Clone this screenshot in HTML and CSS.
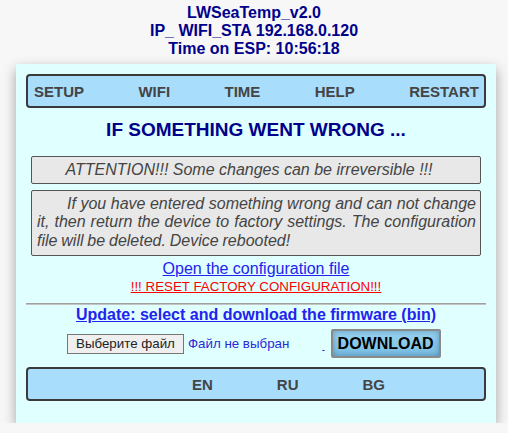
FILE: index.html
```html
<!DOCTYPE html>
<html>
<head>
<meta charset="utf-8">
<link rel="stylesheet" href="styles.css">
</head>
<body>
<header class="top">
  <div>LWSeaTemp_v2.0</div>
  <div>IP_ WIFI_STA 192.168.0.120</div>
  <div>Time on ESP: 10:56:18</div>
</header>
<main class="card">
  <nav class="bar menu">
    <a>SETUP</a><a>WIFI</a><a>TIME</a><a>HELP</a><a>RESTART</a>
  </nav>
  <h3 class="title">IF SOMETHING WENT WRONG ...</h3>
  <div class="note center">ATTENTION!!! Some changes can be irreversible !!!</div>
  <div class="note text">If you have entered something wrong and can not change it, then return the device to factory settings. The configuration file will be deleted. Device rebooted!</div>
  <div class="links">
    <a class="link" href="#">Open the configuration file</a>
    <a class="reset" href="#">!!! RESET FACTORY CONFIGURATION!!!</a>
  </div>
  <hr class="sep">
  <a class="update" href="#">Update: select and download the firmware (bin)</a>
  <form class="upload">
    <span class="file"><span class="filebtn">Выберите файл</span><span class="filename">Файл не выбран</span></span>
    <a class="blank" href="#">&nbsp;</a>
    <span class="dl">DOWNLOAD</span>
  </form>
  <nav class="bar langs">
    <a>EN</a><a>RU</a><a>BG</a>
  </nav>
</main>
</body>
</html>
```
FILE: styles.css
```css
html, body {
  margin: 0;
  padding: 0;
  background: #f7f7f7;
  font-family: "Liberation Sans", Arial, sans-serif;
}
.top {
  padding-top: 4px;
  text-align: center;
  color: #00008b;
  font-weight: bold;
  font-size: 16px;
  line-height: 18px;
}
.card {
  width: 480px;
  margin: 6px 0 0 16px;
  background: #e0ffff;
  box-shadow: 0 5px 12px rgba(0, 0, 0, 0.35);
  padding: 10px 10px 22px;
  box-sizing: border-box;
  display: flex;
  flex-direction: column;
}
.bar {
  height: 34px;
  box-sizing: border-box;
  border: 2px solid #3a3a3a;
  border-radius: 4px;
  background: #a8ddfb;
  display: flex;
  align-items: center;
  font-size: 15px;
  font-weight: bold;
  color: #444;
}
.menu {
  justify-content: space-between;
  padding: 0 5px 0 6px;
}
.langs {
  padding-left: 164px;
  gap: 64px;
}
.title {
  margin: 11px 0 15px;
  text-align: center;
  font-size: 19px;
  line-height: 22px;
  color: #00008b;
  font-weight: bold;
}
.note {
  margin: 0 5px;
  background: #e8e8e8;
  border: 1px solid #555;
  border-radius: 2px;
  color: #444;
  font-style: italic;
  font-size: 16px;
  line-height: 18px;
  padding: 4px 5px;
}
.note.center {
  text-align: center;
  padding-right: 19px;
}
.note.text {
  margin-top: 6px;
  text-align: justify;
  text-indent: 30px;
  word-spacing: -0.6px;
  line-height: 18.4px;
  padding: 4px 4px 5px 5px;
}
.links {
  margin-top: 4px;
  display: flex;
  flex-direction: column;
  align-items: center;
}
.link {
  color: #2323ee;
  font-size: 16px;
  line-height: 18.4px;
}
.reset {
  color: #ff0000;
  font-size: 13.33px;
  line-height: 15px;
}
.sep {
  width: 100%;
  margin: 9px 0 1px;
  border: 0;
  border-top: 1px solid #a0a0a0;
  border-bottom: 1px solid #c4c4c4;
  height: 0;
}
.update {
  align-self: center;
  color: #2323ee;
  font-weight: bold;
  font-size: 16px;
  line-height: 18.4px;
}
.upload {
  margin: 5px 0 9px;
  display: flex;
  align-items: center;
  padding-left: 41px;
}
.file {
  display: flex;
  align-items: center;
  font-size: 13.33px;
}
.filebtn {
  height: 20px;
  box-sizing: border-box;
  border: 1px solid #767676;
  background: #efefef;
  color: #222;
  padding: 0 8px;
  line-height: 18px;
  margin-right: 4px;
}
.filename {
  color: #2a2ad8;
}
.blank {
  margin-left: 33px;
  margin-right: 6px;
  margin-top: 6px;
  color: #2323ee;
  font-size: 8px;
}
.dl {
  width: 110px;
  height: 29px;
  box-sizing: border-box;
  border: 2px solid #8a8a8a;
  border-radius: 2px;
  background: linear-gradient(#9ad4f2, #78bde2);
  box-shadow: inset 0 0 6px rgba(0, 40, 90, 0.35);
  font-weight: bold;
  font-size: 16px;
  color: #000;
  display: flex;
  align-items: center;
  justify-content: center;
}
```
